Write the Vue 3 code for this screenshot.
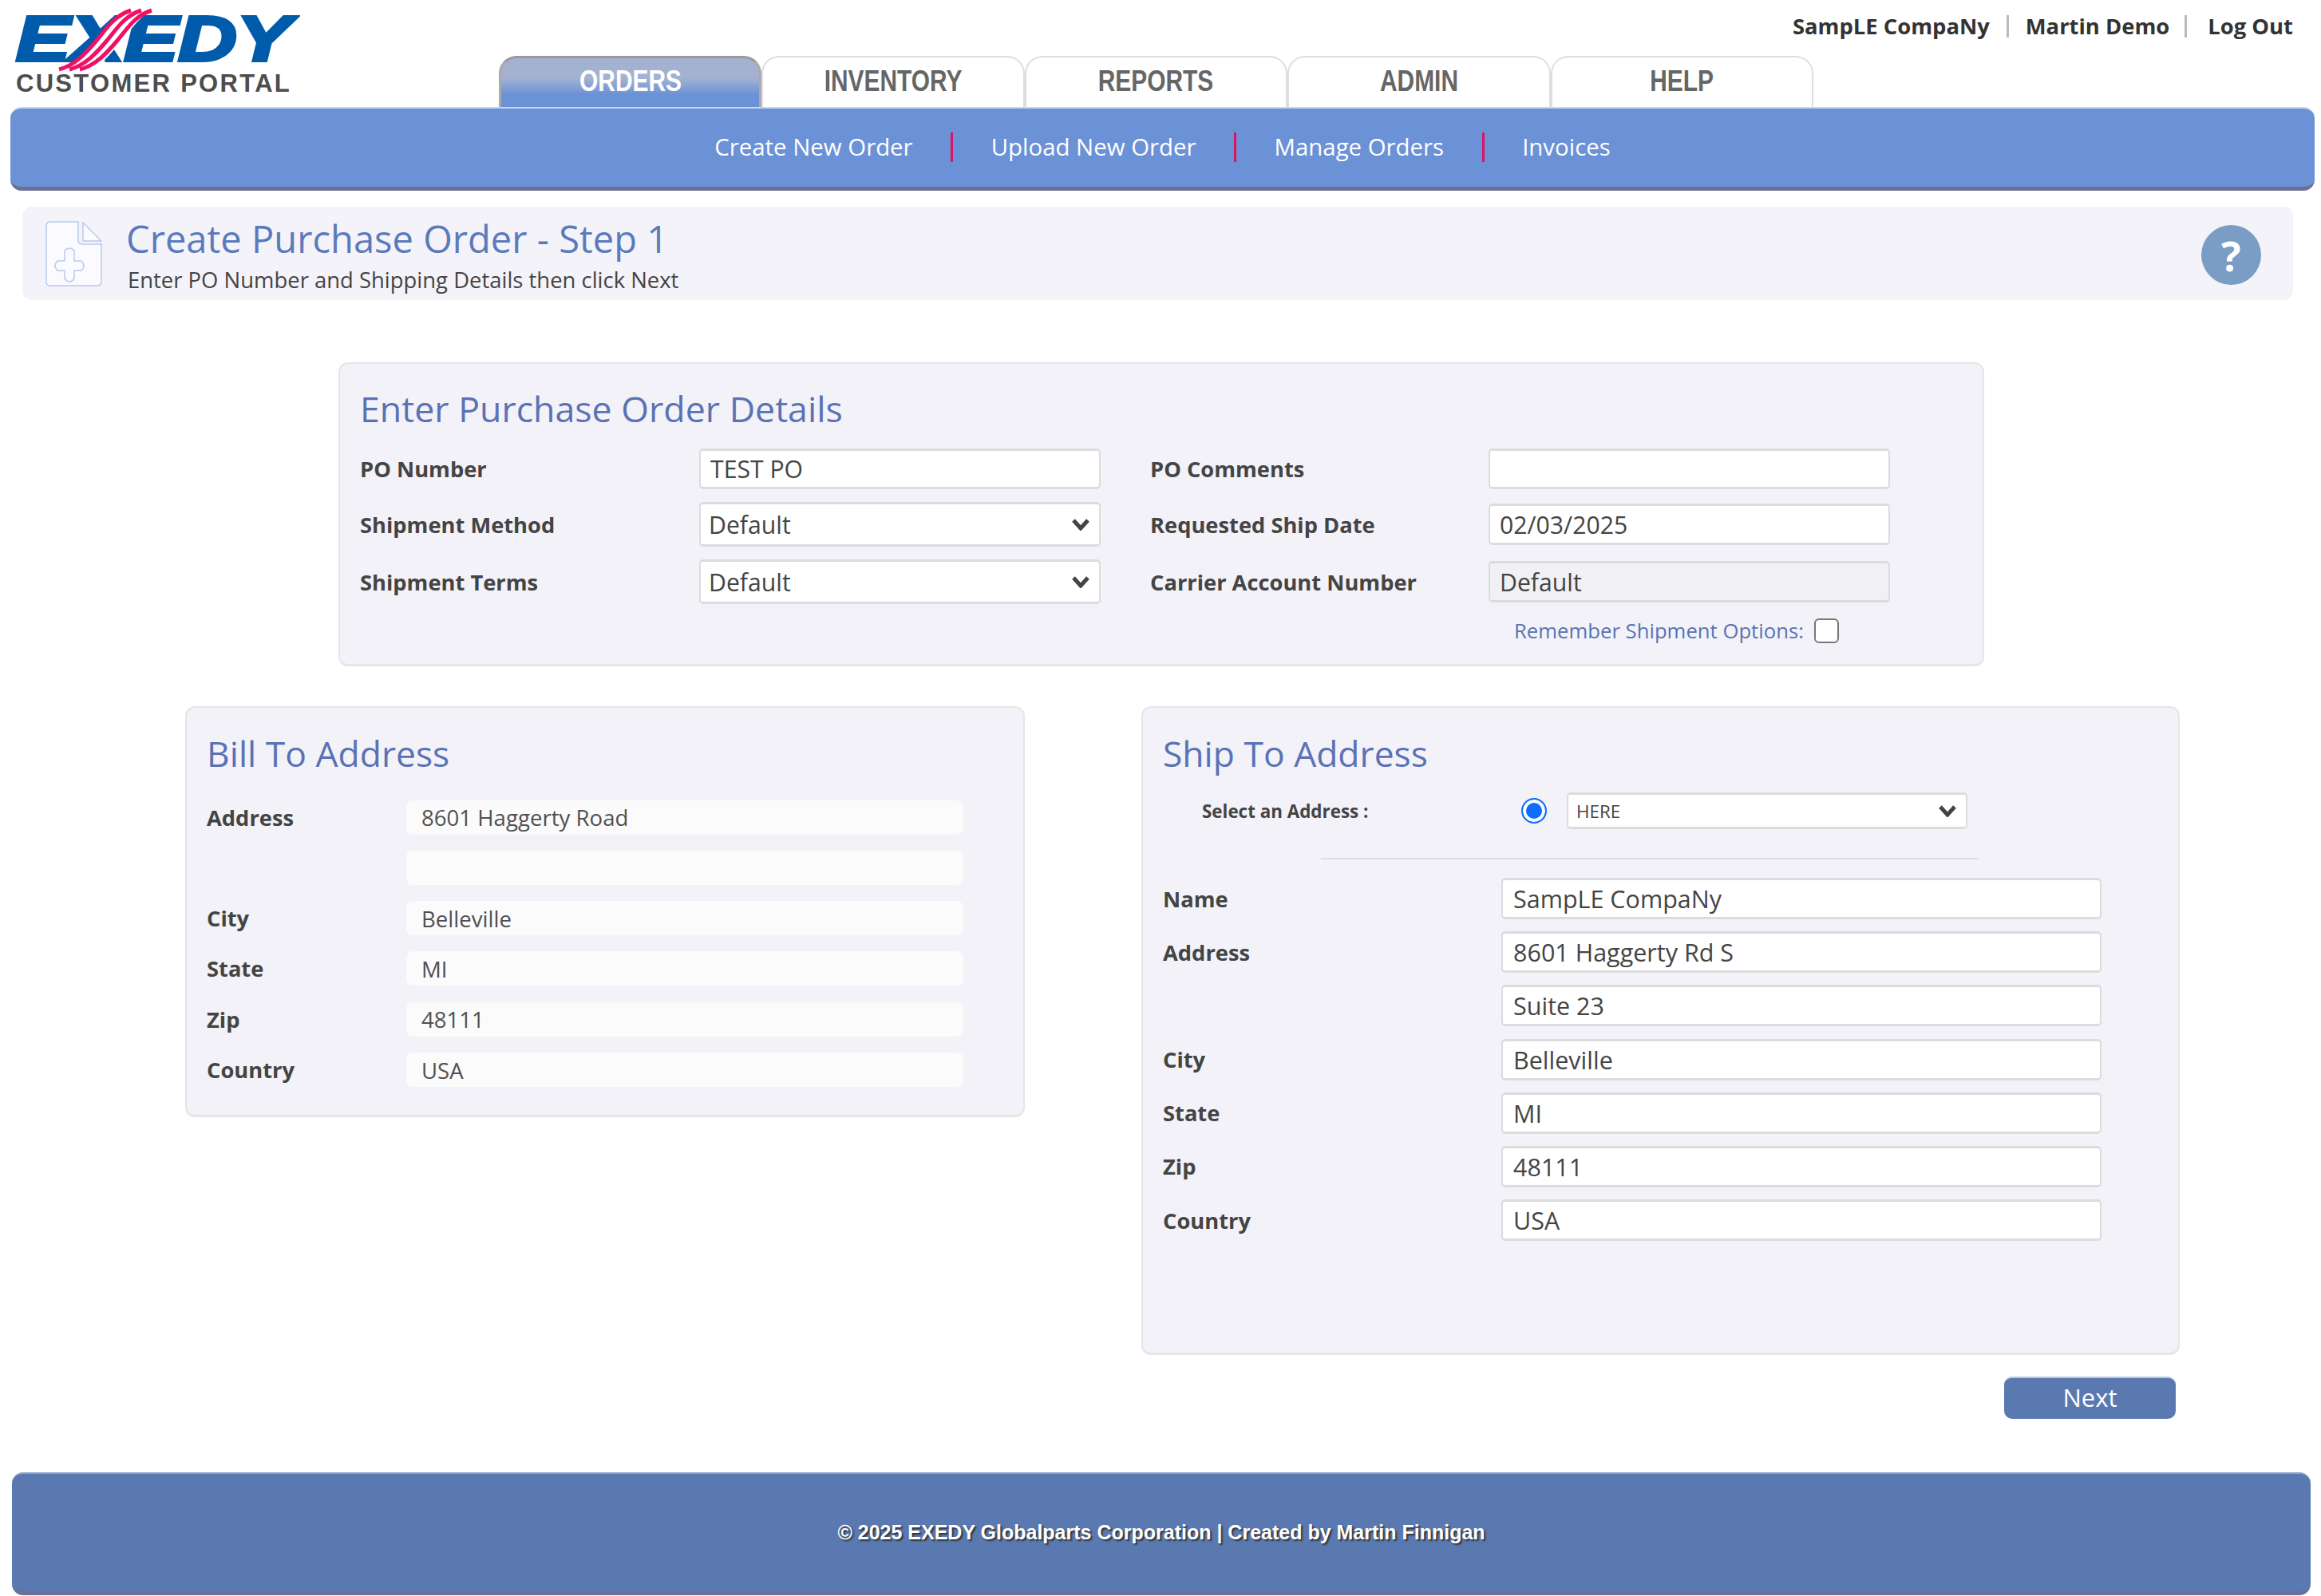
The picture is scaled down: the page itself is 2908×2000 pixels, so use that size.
<script setup>
const tabs = ['ORDERS', 'INVENTORY', 'REPORTS', 'ADMIN', 'HELP']
const links = ['Create New Order', 'Upload New Order', 'Manage Orders', 'Invoices']
const billRows = [
  { label: 'Address', value: '8601 Haggerty Road' },
  { label: '', value: '' },
  { label: 'City', value: 'Belleville' },
  { label: 'State', value: 'MI' },
  { label: 'Zip', value: '48111' },
  { label: 'Country', value: 'USA' }
]
const shipRows = [
  { label: 'Name', value: 'SampLE CompaNy' },
  { label: 'Address', value: '8601 Haggerty Rd S' },
  { label: '', value: 'Suite 23' },
  { label: 'City', value: 'Belleville' },
  { label: 'State', value: 'MI' },
  { label: 'Zip', value: '48111' },
  { label: 'Country', value: 'USA' }
]
</script>

<template>
  <div class="page">
    <header class="header">
      <div class="logo">
        <div class="logo-word">EXEDY</div>
        <svg class="logo-stripes" viewBox="0 0 400 90" width="400" height="90">
          <path d="M66 90 C92 84 108 66 120 52 C132 38 142 20 160 10 L196 10 C176 18 164 38 150 54 C138 68 124 84 114 90 Z" fill="#fff" />
          <g fill="none" stroke="#ee1166" stroke-width="5">
            <path d="M74 87 C94 82 108 66 120 52 C132 38 142 20 164 13" />
            <path d="M87 87 C107 82 121 66 133 52 C145 38 155 20 177 13" />
            <path d="M100 87 C120 82 134 66 146 52 C158 38 168 20 190 13" />
          </g>
        </svg>
        <div class="logo-sub">CUSTOMER PORTAL</div>
      </div>
      <div class="header-right">
        <div class="user-bar">
          <span>SampLE CompaNy</span>
          <i class="user-sep"></i>
          <span>Martin Demo</span>
          <i class="user-sep wide"></i>
          <span>Log Out</span>
        </div>
        <div class="tabs">
          <div v-for="(tab, index) in tabs" :key="tab" :class="['tab', { active: index === 0 }]">
            <span>{{ tab }}</span>
          </div>
        </div>
      </div>
    </header>

    <nav class="subnav">
      <template v-for="(link, index) in links" :key="link">
        <i v-if="index > 0" class="subnav-sep"></i>
        <span>{{ link }}</span>
      </template>
    </nav>

    <section class="banner">
      <svg class="doc-icon" viewBox="0 0 72 82" width="72" height="82">
        <path d="M6 1 H41 V24 Q41 29 46 29 H70 V76 Q70 81 65 81 H6 Q1 81 1 76 V6 Q1 1 6 1 Z" fill="#fafaff" stroke="#b8caee" stroke-width="1.5" />
        <path d="M47 2 L70 25 H47 Z" fill="#fafaff" stroke="#b8caee" stroke-width="1.5" stroke-linejoin="round" />
        <path d="M24 37 Q30 31 36 37 V50 H45 Q51 56 45 62 H36 V72 Q30 80 24 72 V62 H15 Q9 56 15 50 H24 Z" fill="#fafaff" stroke="#b8caee" stroke-width="1.5" />
      </svg>
      <div class="banner-text">
        <h1>Create Purchase Order - Step 1</h1>
        <p>Enter PO Number and Shipping Details then click Next</p>
      </div>
      <div class="help">?</div>
    </section>

    <section class="panel po-panel">
      <h2>Enter Purchase Order Details</h2>
      <div class="po-grid">
        <label>PO Number</label>
        <div class="input h51">TEST PO</div>
        <label>PO Comments</label>
        <div class="input h51"></div>

        <label>Shipment Method</label>
        <div class="input select h56">
          Default
          <svg class="chevron" viewBox="0 0 22 15" width="22" height="15"><path d="M2 2 L11 12 L20 2" fill="none" stroke="#444" stroke-width="5" /></svg>
        </div>
        <label>Requested Ship Date</label>
        <div class="input h52">02/03/2025</div>

        <label>Shipment Terms</label>
        <div class="input select h56">
          Default
          <svg class="chevron" viewBox="0 0 22 15" width="22" height="15"><path d="M2 2 L11 12 L20 2" fill="none" stroke="#444" stroke-width="5" /></svg>
        </div>
        <label>Carrier Account Number</label>
        <div class="input h52 disabled">Default</div>

        <div class="remember">
          <span>Remember Shipment Options:</span>
          <i class="checkbox"></i>
        </div>
      </div>
    </section>

    <div class="address-row">
      <section class="panel bill-panel">
        <h2>Bill To Address</h2>
        <div class="bill-grid">
          <template v-for="(row, index) in billRows" :key="index">
            <label>{{ row.label }}</label>
            <div class="readonly">{{ row.value }}</div>
          </template>
        </div>
      </section>

      <section class="panel ship-panel">
        <h2>Ship To Address</h2>
        <div class="select-address">
          <span class="select-label">Select an Address :</span>
          <i class="radio"></i>
          <div class="input select small">
            HERE
            <svg class="chevron" viewBox="0 0 22 15" width="22" height="15"><path d="M2 2 L11 12 L20 2" fill="none" stroke="#444" stroke-width="5" /></svg>
          </div>
        </div>
        <div class="divider"></div>
        <div class="ship-grid">
          <template v-for="(row, index) in shipRows" :key="index">
            <label>{{ row.label }}</label>
            <div class="input h52">{{ row.value }}</div>
          </template>
        </div>
      </section>
    </div>

    <div class="actions">
      <button class="next">Next</button>
    </div>

    <footer class="footer">© 2025 EXEDY Globalparts Corporation | Created by Martin Finnigan</footer>
  </div>
</template>

<style>
body {
  background: #fff;
}
</style>

<style scoped>
.page {
  width: 2908px;
  font-family: "Open Sans", "Liberation Sans", sans-serif;
  color: #444;
}

.header {
  display: flex;
  height: 134px;
}

.logo {
  width: 625px;
  flex-shrink: 0;
  position: relative;
}

.logo-word {
  width: 272px;
  height: 83px;
  margin-left: 20px;
  padding-top: 7px;
  font-family: "Liberation Sans", Arial, sans-serif;
  font-weight: 700;
  font-style: italic;
  font-size: 80px;
  line-height: 83px;
  color: #005bab;
  -webkit-text-stroke: 4px #005bab;
  transform: scaleX(1.27);
  transform-origin: left center;
}

.logo-stripes {
  position: absolute;
  top: 0;
  left: 0;
}

.logo-sub {
  margin: 0 0 0 20px;
  font-family: "Liberation Sans", Arial, sans-serif;
  font-weight: 700;
  font-size: 31px;
  line-height: 30px;
  letter-spacing: 2.3px;
  color: #4d4d4d;
}

.header-right {
  flex: 1;
  display: flex;
  flex-direction: column;
}

.user-bar {
  height: 70px;
  padding: 0 35px 5px 0;
  box-sizing: border-box;
  display: flex;
  align-items: center;
  justify-content: flex-end;
  font-size: 27.4px;
  font-weight: 700;
  color: #333;
}

.user-sep {
  width: 3px;
  height: 28px;
  margin: 0 21px;
  background: #bbb;
}

.user-sep.wide {
  margin: 0 26px 0 19px;
}

.tabs {
  display: flex;
  height: 64px;
}

.tab {
  width: 329.4px;
  box-sizing: border-box;
  border: 2px solid #dedede;
  border-bottom: none;
  border-radius: 22px 22px 0 0;
  display: flex;
  justify-content: center;
  padding-top: 8px;
  font-family: "Liberation Sans", Arial, sans-serif;
  font-size: 36px;
  line-height: 44px;
  font-weight: 700;
  color: #666;
}

.tab span {
  display: inline-block;
  transform: scaleX(0.83);
}

.tab.active {
  padding-top: 7px;
  color: #fff;
  border-width: 3px 3px 0;
  border-color: #999 #aaa transparent;
  background: linear-gradient(#a4b2d2 0%, #a4b2d2 40%, #6b91d6 75%);
}

.subnav {
  margin: 0 8px 0 13px;
  height: 105px;
  padding-bottom: 2px;
  box-sizing: border-box;
  background: #6b91d6;
  border-top: 2px solid #c9d6ec;
  border-bottom: 5px solid #6a7096;
  border-radius: 14px;
  display: flex;
  align-items: center;
  justify-content: center;
  font-size: 29.4px;
  color: #fff;
}

.subnav-sep {
  width: 3px;
  height: 37px;
  margin: 0 47.5px;
  background: #e0115f;
}

.banner {
  margin: 20px 35px 0 28px;
  height: 117px;
  box-sizing: border-box;
  padding: 0 40px 0 29px;
  background: #f3f3f9;
  border-radius: 12px;
  display: flex;
  align-items: center;
}

.doc-icon {
  flex-shrink: 0;
  margin-right: 29px;
}

.banner-text {
  flex: 1;
  padding-top: 2px;
}

.banner h1 {
  margin: 0;
  font-size: 47.1px;
  line-height: 64px;
  font-weight: 400;
  color: #5b7abb;
}

.banner p {
  margin: 1px 0 0;
  padding-left: 2px;
  font-size: 27.45px;
  line-height: 38px;
  color: #444;
}

.help {
  width: 75px;
  height: 75px;
  margin-top: 4px;
  border-radius: 50%;
  background: #7a9dc5;
  color: #fff;
  font-size: 52px;
  font-weight: 700;
  line-height: 75px;
  text-align: center;
}

.panel {
  box-sizing: border-box;
  background: #f2f2f8;
  border: 2px solid #e6e6ea;
  border-bottom-width: 3px;
  border-radius: 12px;
}

.panel h2 {
  margin: 0;
  font-size: 44.4px;
  line-height: 60px;
  font-weight: 400;
  color: #5a72b5;
}

.panel label {
  font-size: 27.3px;
  font-weight: 700;
  color: #444;
}

.po-panel {
  margin: 78px 0 0 424px;
  width: 2062px;
  height: 381px;
  padding: 26px 24px 0 25px;
}

.po-panel h2 {
  font-size: 44.7px;
}

.po-grid {
  margin-top: 20px;
  display: grid;
  grid-template-columns: 425px 503px 486px 503px;
  grid-template-rows: 51px 56px 56px auto;
  row-gap: 16px;
  align-items: center;
}

.po-grid > label:nth-child(4n + 3) {
  padding-left: 62px;
}

.input {
  box-sizing: border-box;
  background: #fff;
  border: 2px solid #dcdcdf;
  border-top-width: 3px;
  border-bottom-width: 3px;
  border-radius: 5px;
  padding: 0 12px;
  display: flex;
  align-items: center;
  justify-content: space-between;
  font-size: 30.2px;
  color: #444;
}

.h51 { height: 51px; }
.h52 { height: 52px; }
.h56 { height: 56px; }

.input.select {
  padding-left: 10px;
}

.input.disabled {
  background: #f0f0f5;
}

.chevron {
  flex-shrink: 0;
}

.remember {
  grid-column: 4;
  padding-left: 32px;
  display: flex;
  align-items: center;
  font-size: 25.7px;
  color: #5a72b5;
}

.checkbox {
  width: 31px;
  height: 31px;
  box-sizing: border-box;
  margin-left: 13px;
  background: #fff;
  border: 2.5px solid #777;
  border-radius: 6px;
}

.address-row {
  margin: 50px 0 0 232px;
  display: flex;
  align-items: flex-start;
  gap: 146px;
}

.bill-panel {
  width: 1052px;
  height: 515px;
  padding: 27px 24px 0 25px;
}

.bill-grid {
  margin-top: 28.6px;
  display: grid;
  grid-template-columns: 250px 698px;
  grid-auto-rows: 43px;
  row-gap: 20.3px;
  align-items: center;
}

.readonly {
  height: 100%;
  box-sizing: border-box;
  background: #fbfbfc;
  border-radius: 8px;
  padding-left: 19px;
  display: flex;
  align-items: center;
  font-size: 27.6px;
  color: #505050;
}

.ship-panel {
  width: 1301px;
  height: 813px;
  padding: 27px 24px 0 25px;
}

.select-address {
  margin-top: 19px;
  display: grid;
  grid-template-columns: 449px 57px 502px;
  align-items: center;
}

.select-label {
  padding-left: 49px;
  font-size: 22.4px;
  font-weight: 700;
  color: #444;
}

.radio {
  width: 32px;
  height: 32px;
  box-sizing: border-box;
  border: 2.5px solid #0d6efd;
  border-radius: 50%;
  background: #0d6efd;
  box-shadow: inset 0 0 0 4px #fff;
}

.input.small {
  height: 46px;
  font-size: 22.4px;
}

.divider {
  margin: 36px 0 23px 198px;
  width: 823px;
  height: 2px;
  background: #ddd;
}

.ship-grid {
  display: grid;
  grid-template-columns: 424px 752px;
  grid-auto-rows: 52px;
  row-gap: 15.2px;
  align-items: center;
}

.ship-grid .input {
  padding-left: 13px;
  font-size: 30.5px;
}

.actions {
  margin-top: 27px;
  padding-right: 182px;
  display: flex;
  justify-content: flex-end;
}

.next {
  width: 215px;
  height: 53px;
  padding: 0 0 3px;
  background: #5a79b0;
  border: none;
  border-top: 2px solid #b9c7df;
  border-radius: 10px;
  font-family: inherit;
  font-size: 31px;
  color: #fff;
}

.footer {
  margin: 67px 13px 0 15px;
  height: 154px;
  box-sizing: border-box;
  background: #5a79b0;
  border-top: 2px solid #8aa1c9;
  border-bottom: 5px solid #6a7096;
  border-radius: 14px;
  display: flex;
  align-items: center;
  justify-content: center;
  font-family: "Liberation Sans", Arial, sans-serif;
  font-size: 25px;
  font-weight: 700;
  color: #fff;
  text-shadow: 2px 2px 2px #333;
}
</style>
